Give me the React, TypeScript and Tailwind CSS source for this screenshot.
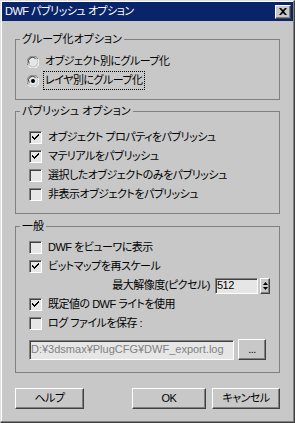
import type { ReactNode } from 'react';

// classic win 3D edges
const raised = 'border border-t-white border-l-white border-r-[#404040] border-b-[#404040] shadow-[inset_-1px_-1px_#808080]';
const sunken = 'border border-t-[#808080] border-l-[#808080] border-r-white border-b-white shadow-[inset_1px_1px_#404040]';

function Check({ checked }: { checked?: boolean }) {
    return (
        <span className={`w-[13px] h-[13px] shrink-0 bg-[#e6e6e6] flex items-center justify-center ${sunken}`}>
            {checked && (
                <svg width="7" height="7" viewBox="0 0 7 7">
                    <path d="M0 2h1v1h1v1h1V3h1V2h1V1h1V0h1v2H6v1H5v1H4v1H3v1H2V5H1V4H0z" fill="#000" />
                </svg>
            )}
        </span>
    );
}

function Radio({ checked }: { checked?: boolean }) {
    return (
        <svg width="12" height="12" viewBox="0 0 12 12" className="shrink-0">
            <path d="M11 3.2A5.5 5.5 0 0 0 1.6 2.1 5.5 5.5 0 0 0 1 9.5" stroke="#808080" fill="none" />
            <path d="M1 9.5a5.5 5.5 0 0 0 10-6.3" stroke="#fff" fill="none" />
            <circle cx="6" cy="6" r="4.2" fill="#e6e6e6" />
            <path d="M2.2 7.5A4 4 0 0 1 8.5 2.6" stroke="#404040" fill="none" />
            {checked && <circle cx="6" cy="6" r="2" fill="#000" />}
        </svg>
    );
}

function Row({ children, className = '' }: { children: ReactNode; className?: string }) {
    return <div className={`h-[19px] flex items-center ${className}`}>{children}</div>;
}

function CheckRow({ label, checked }: { label: string; checked?: boolean }) {
    return (
        <Row className="pl-[13px] gap-[6px]">
            <Check checked={checked} />
            <span>{label}</span>
        </Row>
    );
}

function Group({ title, children, className = '' }: { title: string; children: ReactNode; className?: string }) {
    return (
        <fieldset className={`border border-[#808080] p-0 m-0 min-w-0 ${className}`}>
            <legend className="ml-[4px] px-[2px] leading-[14px] tracking-[0px]">{title}</legend>
            {children}
        </fieldset>
    );
}

function Btn({ label, w }: { label: string; w: string }) {
    return (
        <button className={`${w} h-[21px] bg-[#c8c8c8] flex items-center justify-center leading-none ${raised}`}>
            {label}
        </button>
    );
}

export default function App() {
    return (
        <div className="w-[295px] h-[423px] bg-[#c8c8c8] border border-t-[#e0e0e0] border-l-[#e0e0e0] border-r-[#404040] border-b-[#404040] shadow-[inset_-1px_-1px_#808080,inset_1px_1px_#fff] p-[1px] flex flex-col text-[11px] tracking-[-0.5px] text-black font-['Liberation_Sans','Noto_Sans_CJK_JP',sans-serif] [font-feature-settings:'palt'] select-none">
            <div className="h-[19px] bg-[#0a246a] flex items-center justify-between pl-[3px] pr-[2px] text-white">
                <span>DWF パブリッシュ オプション</span>
                <span className={`w-[16px] h-[14px] bg-[#c8c8c8] flex items-center justify-center ${raised}`}>
                    <svg width="8" height="7" viewBox="0 0 8 7">
                        <path d="M0 0h2l2 2 2-2h2L5 3.5 8 7H6L4 5 2 7H0l3-3.5z" fill="#000" />
                    </svg>
                </span>
            </div>

            <div className="flex-1 px-[13px] flex flex-col">
                <Group title="グループ化オプション" className="mt-[11px] pt-[6px] pb-[9px]">
                    <Row className="pl-[11px] gap-[5px]">
                        <Radio />
                        <span className="px-[1px]">オブジェクト別にグループ化</span>
                    </Row>
                    <Row className="pl-[11px] gap-[5px]">
                        <Radio checked />
                        <span className="px-[1px] outline-1 outline-dotted outline-black leading-[17px]">レイヤ別にグループ化</span>
                    </Row>
                </Group>

                <Group title="パブリッシュ オプション" className="mt-[4px] pt-[10px] pb-[9px]">
                    <CheckRow label="オブジェクト プロパティをパブリッシュ" checked />
                    <CheckRow label="マテリアルをパブリッシュ" checked />
                    <CheckRow label="選択したオブジェクトのみをパブリッシュ" />
                    <CheckRow label="非表示オブジェクトをパブリッシュ" />
                </Group>

                <Group title="一般" className="mt-[5px] pt-[5px] pb-[12px]">
                    <CheckRow label="DWF をビューワに表示" />
                    <CheckRow label="ビットマップを再スケール" checked />
                    <Row className="justify-end pr-[9px]">
                        <span className="mr-[5px]">最大解像度(ピクセル)</span>
                        <span className={`w-[43px] h-[16px] bg-[#e6e6e6] pl-[1px] flex items-center leading-none ${sunken}`}>512</span>
                        <span className={`ml-[2px] w-[10px] h-[16px] bg-[#c8c8c8] flex flex-col items-center justify-center gap-[2px] ${raised}`}>
                            <svg width="5" height="3" viewBox="0 0 5 3"><path d="M2.5 0L5 3H0z" fill="#000" /></svg>
                            <svg width="5" height="3" viewBox="0 0 5 3"><path d="M0 0h5L2.5 3z" fill="#000" /></svg>
                        </span>
                    </Row>
                    <CheckRow label="既定値の DWF ライトを使用" checked />
                    <CheckRow label="ログ ファイルを保存 :" />
                    <div className="mt-[6px] pl-[13px] flex items-center gap-[4px]">
                        <span className={`w-[205px] h-[20px] bg-[#e6e6e6] pl-[1px] flex items-center text-[#808080] leading-none whitespace-nowrap overflow-hidden tracking-[0px] ${sunken}`}>
                            D:¥3dsmax¥PlugCFG¥DWF_export.log
                        </span>
                        <Btn label="..." w="w-[28px]" />
                    </div>
                </Group>

                <div className="mt-[15px] flex items-center">
                    <Btn label="ヘルプ" w="w-[69px]" />
                    <div className="ml-auto flex gap-[6px]">
                        <Btn label="OK" w="w-[74px]" />
                        <Btn label="キャンセル" w="w-[68px]" />
                    </div>
                </div>
            </div>
        </div>
    );
}
